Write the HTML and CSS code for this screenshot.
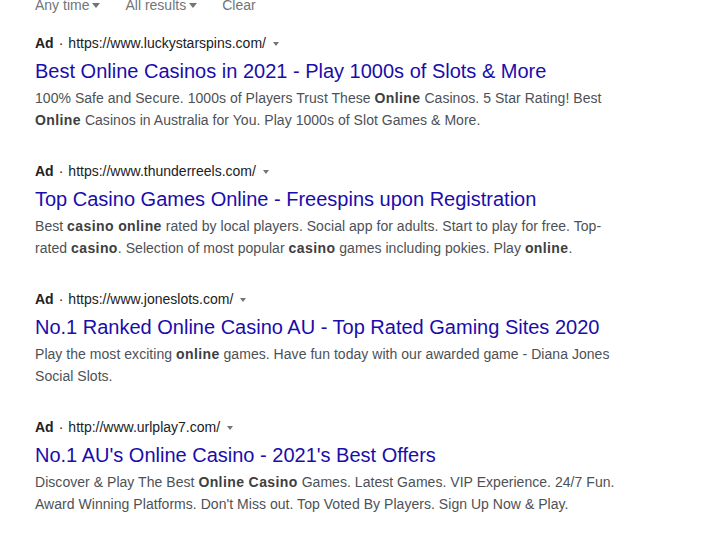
FILE: index.html
```html
<!DOCTYPE html>
<html>
<head>
<meta charset="utf-8">
<link rel="stylesheet" href="styles.css">
</head>
<body>
<div class="page">
  <div class="filters">
    <span class="filter">Any time<span class="caret"></span></span>
    <span class="filter">All results<span class="caret"></span></span>
    <span class="filter">Clear</span>
  </div>

  <div class="result">
    <div class="adline"><b>Ad</b><span class="dot">·</span><span class="url">https://www.luckystarspins.com/</span><span class="caret small"></span></div>
    <div class="title">Best Online Casinos in 2021 - Play 1000s of Slots &amp; More</div>
    <div class="desc">100% Safe and Secure. 1000s of Players Trust These <b>Online</b> Casinos. 5 Star Rating! Best <b>Online</b> Casinos in Australia for You. Play 1000s of Slot Games &amp; More.</div>
  </div>

  <div class="result">
    <div class="adline"><b>Ad</b><span class="dot">·</span><span class="url">https://www.thunderreels.com/</span><span class="caret small"></span></div>
    <div class="title">Top Casino Games Online - Freespins upon Registration</div>
    <div class="desc">Best <b>casino online</b> rated by local players. Social app for adults. Start to play for free. Top-rated <b>casino</b>. Selection of most popular <b>casino</b> games including pokies. Play <b>online</b>.</div>
  </div>

  <div class="result">
    <div class="adline"><b>Ad</b><span class="dot">·</span><span class="url">https://www.joneslots.com/</span><span class="caret small"></span></div>
    <div class="title">No.1 Ranked Online Casino AU - Top Rated Gaming Sites 2020</div>
    <div class="desc">Play the most exciting <b>online</b> games. Have fun today with our awarded game - Diana Jones Social Slots.</div>
  </div>

  <div class="result">
    <div class="adline"><b>Ad</b><span class="dot">·</span><span class="url">http://www.urlplay7.com/</span><span class="caret small"></span></div>
    <div class="title">No.1 AU's Online Casino - 2021's Best Offers</div>
    <div class="desc">Discover &amp; Play The Best <b>Online Casino</b> Games. Latest Games. VIP Experience. 24/7 Fun. Award Winning Platforms. Don't Miss out. Top Voted By Players. Sign Up Now &amp; Play.</div>
  </div>
</div>
</body>
</html>
```

FILE: styles.css
```css
html, body {
  margin: 0;
  padding: 0;
  background: #ffffff;
}
body {
  font-family: "Liberation Sans", Arial, sans-serif;
  overflow: hidden;
}
.page {
  padding-left: 35px;
  width: 580px;
}
.filters {
  margin-top: -5px;
  height: 20px;
  line-height: 20px;
  font-size: 14px;
  color: #70757a;
  display: flex;
  gap: 25px;
}
.filter {
  display: inline-flex;
  align-items: center;
}
.caret {
  display: inline-block;
  width: 0;
  height: 0;
  border-left: 4px solid transparent;
  border-right: 4px solid transparent;
  border-top: 5px solid #70757a;
  margin-left: 3px;
  margin-top: 1px;
}
.caret.small {
  border-left-width: 3.5px;
  border-right-width: 3.5px;
  border-top-width: 4px;
  margin-left: 7px;
}
.result {
  margin-top: 18px;
}
.result + .result {
  margin-top: 30px;
}
.adline {
  display: flex;
  align-items: center;
  height: 20px;
  line-height: 20px;
  font-size: 14px;
  color: #202124;
}
.adline b {
  font-weight: bold;
}
.dot {
  margin: 0 5px;
}
.title {
  margin-top: 5px;
  font-size: 20px;
  line-height: 26px;
  color: #1a0dab;
}
.desc {
  margin-top: 3px;
  font-size: 14px;
  line-height: 22px;
  letter-spacing: 0.04px;
  color: #4d5156;
}
.desc b {
  color: #3c4043;
  letter-spacing: 0.4px;
}
```
